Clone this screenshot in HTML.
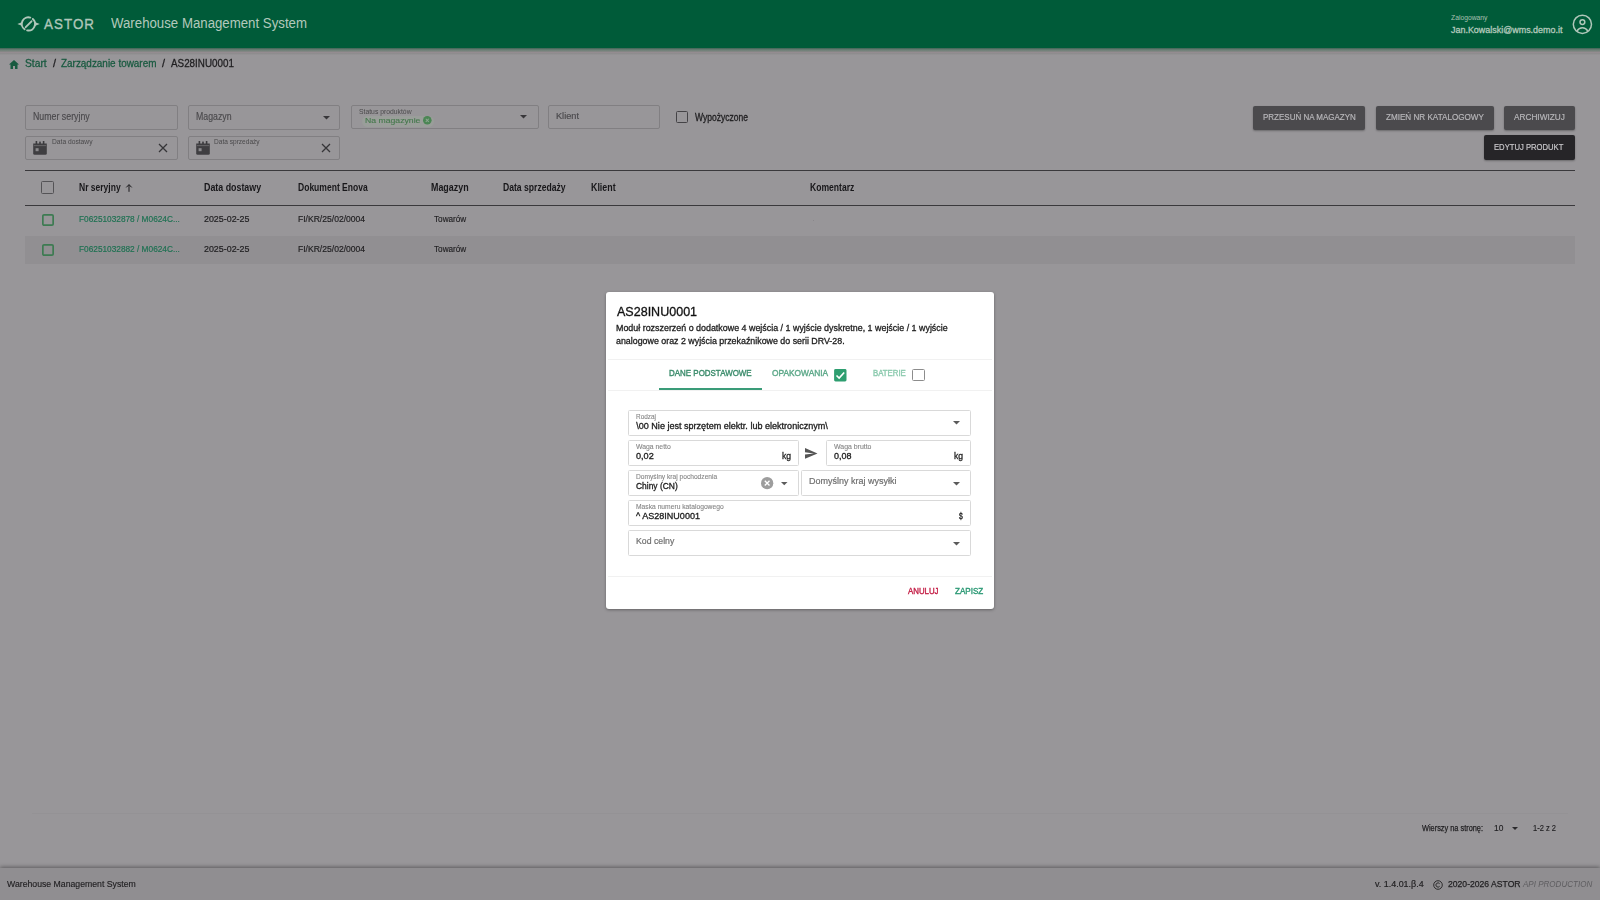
<!DOCTYPE html>
<html><head><meta charset="utf-8">
<style>
*{margin:0;padding:0;box-sizing:border-box}
html,body{width:1600px;height:900px;overflow:hidden}
body{background:#989699;font-family:"Liberation Sans",sans-serif;position:relative}
#root{position:absolute;left:0;top:0;width:1600px;height:900px;filter:blur(0.3px)}
.a{position:absolute}
.t{position:absolute;white-space:nowrap;line-height:1;transform-origin:0 0}
svg{position:absolute;overflow:visible}
</style></head><body><div id="root">
<div class="a" style="left:0px;top:48px;width:1600px;height:7px;background:linear-gradient(#3d6354 0%,#6a7e75 25%,#7b847f 45%,#958c91 62%,#8c8c8d 82%,#989699 100%)"></div>
<div class="a" style="left:0px;top:0px;width:1600px;height:48px;background:#005b39"></div>
<svg style="left:0;top:0" width="50" height="48" viewBox="0 0 50 48">
<g fill="none" stroke="#b0c7ba" stroke-width="1.9" stroke-linecap="round">
<path d="M24.61 29.31 A6.6 6.6 0 0 1 30.33 17.59"/>
<path d="M32.82 18.99 A6.6 6.6 0 0 1 27.14 30.38"/>
<path d="M25.7 27.2 L31.5 21.3"/>
</g>
<path d="M17.4 24 L22.4 21.9 L22.4 26.1 Z" fill="#b0c7ba"/>
<path d="M39.8 24 L34.6 21.9 L34.6 26.1 Z" fill="#b0c7ba"/>
</svg>
<div class="t" style="left:43.75px;top:15.94px;font-size:15.36px;color:#b0c7ba;-webkit-text-stroke:0.35px #b0c7ba;letter-spacing:1.2px;transform:scaleX(0.870);">ASTOR</div>
<div class="t" style="left:111.00px;top:15.68px;font-size:14.49px;color:#b3c9bc;transform:scaleX(0.914);">Warehouse Management System</div>
<div class="t" style="left:1451.00px;top:14.96px;font-size:6.52px;color:#a9c0b3;transform:scaleX(1.038);">Zalogowany</div>
<div class="t" style="left:1451.00px;top:26.11px;font-size:8.70px;color:#b3c9bc;-webkit-text-stroke:0.3px #b3c9bc;transform:scaleX(1.029);">Jan.Kowalski@wms.demo.it</div>
<svg style="left:1572px;top:14px" width="21" height="21" viewBox="0 0 21 21">
<g fill="none" stroke="#b0c7ba" stroke-width="1.5">
<circle cx="10.4" cy="10.3" r="9.1"/>
<circle cx="10.4" cy="8.1" r="2.4"/>
<path d="M4.9 17.2 C6.4 14.8 8.2 13.8 10.4 13.8 C12.6 13.8 14.4 14.8 15.9 17.2"/>
</g></svg>
<svg style="left:9px;top:59.5px" width="10" height="9" viewBox="0 0 10 9"><path d="M5 0 L10 4.5 L8.5 4.5 L8.5 9 L6 9 L6 6 L4 6 L4 9 L1.5 9 L1.5 4.5 L0 4.5 Z" fill="#195a40"/></svg>
<div class="t" style="left:25.00px;top:58.06px;font-size:10.87px;color:#195a40;-webkit-text-stroke:0.3px #195a40;transform:scaleX(0.947);">Start</div>
<div class="t" style="left:52.50px;top:57.64px;font-size:11.59px;color:#1f1e20;-webkit-text-stroke:0.35px #1f1e20;transform:scaleX(0.931);">/</div>
<div class="t" style="left:60.75px;top:58.06px;font-size:10.87px;color:#195a40;-webkit-text-stroke:0.3px #195a40;transform:scaleX(0.914);">Zarządzanie towarem</div>
<div class="t" style="left:162.00px;top:57.64px;font-size:11.59px;color:#1f1e20;-webkit-text-stroke:0.35px #1f1e20;transform:scaleX(0.931);">/</div>
<div class="t" style="left:170.75px;top:57.64px;font-size:11.59px;color:#1f1e20;-webkit-text-stroke:0.3px #1f1e20;transform:scaleX(0.850);">AS28INU0001</div>
<div class="a" style="left:25px;top:105px;width:153px;height:25px;border:1px solid #817f82;border-radius:2px"></div>
<div class="t" style="left:33.00px;top:111.70px;font-size:10.00px;color:#4a494c;-webkit-text-stroke:0.15px #4a494c;transform:scaleX(0.880);">Numer seryjny</div>
<div class="a" style="left:188px;top:105px;width:152px;height:25px;border:1px solid #817f82;border-radius:2px"></div>
<div class="t" style="left:195.70px;top:111.70px;font-size:10.00px;color:#4a494c;-webkit-text-stroke:0.15px #4a494c;transform:scaleX(0.875);">Magazyn</div>
<svg style="left:322.5px;top:115.75px" width="7" height="3.5" viewBox="0 0 7 3.5"><path d="M0 0 H7 L3.5 3.5 Z" fill="#38373a"/></svg>
<div class="a" style="left:351px;top:105px;width:188px;height:24px;border:1px solid #817f82;border-radius:2px"></div>
<div class="t" style="left:359.00px;top:108.69px;font-size:6.96px;color:#4a494b;transform:scaleX(0.978);">Status produktów</div>
<div class="a" style="left:362px;top:115.5px;width:72px;height:11px;border-radius:6px;background:#9a9e9a"></div>
<div class="t" style="left:364.80px;top:117.12px;font-size:7.97px;color:#44784b;-webkit-text-stroke:0.1px #44784b;transform:scaleX(1.087);">Na magazynie</div>
<svg style="left:423.4px;top:116.4px" width="8.6" height="8.6" viewBox="0 0 10 10"><circle cx="5" cy="5" r="5" fill="#4b8654"/><path d="M3.2 3.2 L6.8 6.8 M6.8 3.2 L3.2 6.8" stroke="#8fa893" stroke-width="1.2"/></svg>
<svg style="left:519.5px;top:115.25px" width="7" height="3.5" viewBox="0 0 7 3.5"><path d="M0 0 H7 L3.5 3.5 Z" fill="#38373a"/></svg>
<div class="a" style="left:548px;top:105px;width:112px;height:24px;border:1px solid #817f82;border-radius:2px"></div>
<div class="t" style="left:556.00px;top:112.98px;font-size:8.26px;color:#4a494c;-webkit-text-stroke:0.15px #4a494c;transform:scaleX(1.113);">Klient</div>
<div class="a" style="left:676px;top:111px;width:12px;height:12px;border:1.5px solid #444346;border-radius:1.5px"></div>
<div class="t" style="left:694.50px;top:112.88px;font-size:10.14px;color:#1f1e20;-webkit-text-stroke:0.3px #1f1e20;transform:scaleX(0.842);">Wypożyczone</div>
<div class="a" style="left:25px;top:136px;width:153px;height:24px;border:1px solid #817f82;border-radius:2px"></div>
<div class="a" style="left:188px;top:136px;width:152px;height:24px;border:1px solid #817f82;border-radius:2px"></div>
<svg style="left:33px;top:140px" width="14" height="15" viewBox="0 0 14 15"><path d="M0.2 3.4 H13.8 V13.4 Q13.8 14.8 12.4 14.8 H1.6 Q0.2 14.8 0.2 13.4 Z" fill="#3f3e41"/><rect x="2.6" y="1" width="1.6" height="3" fill="#3b3a3d"/><rect x="6.2" y="1.6" width="1.6" height="2.4" fill="#3b3a3d"/><rect x="9.8" y="1" width="1.6" height="3" fill="#3b3a3d"/><rect x="0.8" y="5.2" width="12.4" height="0.9" fill="#6b6a6d"/><rect x="2.6" y="8.2" width="3" height="3" fill="#8a898c"/></svg>
<div class="t" style="left:51.50px;top:138.24px;font-size:7.25px;color:#4a494b;transform:scaleX(0.922);">Data dostawy</div>
<svg style="left:158px;top:143px" width="10" height="10" viewBox="0 0 10 10"><path d="M1 1 L9 9 M9 1 L1 9" stroke="#363538" stroke-width="1.25"/></svg>
<svg style="left:196px;top:140px" width="14" height="15" viewBox="0 0 14 15"><path d="M0.2 3.4 H13.8 V13.4 Q13.8 14.8 12.4 14.8 H1.6 Q0.2 14.8 0.2 13.4 Z" fill="#3f3e41"/><rect x="2.6" y="1" width="1.6" height="3" fill="#3b3a3d"/><rect x="6.2" y="1.6" width="1.6" height="2.4" fill="#3b3a3d"/><rect x="9.8" y="1" width="1.6" height="3" fill="#3b3a3d"/><rect x="0.8" y="5.2" width="12.4" height="0.9" fill="#6b6a6d"/><rect x="2.6" y="8.2" width="3" height="3" fill="#8a898c"/></svg>
<div class="t" style="left:214.30px;top:138.24px;font-size:7.25px;color:#4a494b;transform:scaleX(0.906);">Data sprzedaży</div>
<svg style="left:321px;top:143px" width="10" height="10" viewBox="0 0 10 10"><path d="M1 1 L9 9 M9 1 L1 9" stroke="#363538" stroke-width="1.25"/></svg>
<div class="a" style="left:1252.5px;top:105.5px;width:112.90000000000009px;height:24.0px;background:#4b4a4d;border-radius:2px;box-shadow:0 1px 2px rgba(0,0,0,.3)"></div>
<div class="t" style="left:1262.50px;top:112.92px;font-size:9.28px;color:#b7b6b9;-webkit-text-stroke:0.2px #b7b6b9;transform:scaleX(0.863);">PRZESUŃ NA MAGAZYN</div>
<div class="a" style="left:1375.6px;top:105.5px;width:118.60000000000014px;height:24.0px;background:#4b4a4d;border-radius:2px;box-shadow:0 1px 2px rgba(0,0,0,.3)"></div>
<div class="t" style="left:1386.00px;top:112.92px;font-size:9.28px;color:#b7b6b9;-webkit-text-stroke:0.2px #b7b6b9;transform:scaleX(0.875);">ZMIEŃ NR KATALOGOWY</div>
<div class="a" style="left:1504.3px;top:105.5px;width:70.40000000000009px;height:24.0px;background:#4b4a4d;border-radius:2px;box-shadow:0 1px 2px rgba(0,0,0,.3)"></div>
<div class="t" style="left:1514.00px;top:112.92px;font-size:9.28px;color:#b7b6b9;-webkit-text-stroke:0.2px #b7b6b9;transform:scaleX(0.890);">ARCHIWIZUJ</div>
<div class="a" style="left:1484px;top:135px;width:90.70000000000005px;height:24.5px;background:#262528;border-radius:2px;box-shadow:0 1px 2px rgba(0,0,0,.3)"></div>
<div class="t" style="left:1494.40px;top:142.23px;font-size:9.49px;color:#c9c8cb;-webkit-text-stroke:0.2px #c9c8cb;transform:scaleX(0.807);">EDYTUJ PRODUKT</div>
<div class="a" style="left:25px;top:170px;width:1550px;height:1px;background:#3a393c"></div>
<div class="a" style="left:41px;top:181px;width:12.5px;height:12.5px;border:1.5px solid #545356;border-radius:1.5px"></div>
<div class="t" style="left:79.00px;top:181.66px;font-size:10.87px;color:#18171a;font-weight:bold;transform:scaleX(0.784);">Nr seryjny</div>
<svg style="left:125px;top:183px" width="8" height="9" viewBox="0 0 8 9"><path d="M4 8.8 V1.8 M1.3 4.4 L4 1.6 L6.7 4.4" fill="none" stroke="#18171a" stroke-width="1"/></svg>
<div class="t" style="left:203.80px;top:181.66px;font-size:10.87px;color:#18171a;font-weight:bold;transform:scaleX(0.816);">Data dostawy</div>
<div class="t" style="left:297.60px;top:181.66px;font-size:10.87px;color:#18171a;font-weight:bold;transform:scaleX(0.786);">Dokument Enova</div>
<div class="t" style="left:431.00px;top:181.66px;font-size:10.87px;color:#18171a;font-weight:bold;transform:scaleX(0.819);">Magazyn</div>
<div class="t" style="left:503.00px;top:181.66px;font-size:10.87px;color:#18171a;font-weight:bold;transform:scaleX(0.792);">Data sprzedaży</div>
<div class="t" style="left:591.00px;top:181.66px;font-size:10.87px;color:#18171a;font-weight:bold;transform:scaleX(0.815);">Klient</div>
<div class="t" style="left:810.00px;top:181.66px;font-size:10.87px;color:#18171a;font-weight:bold;transform:scaleX(0.790);">Komentarz</div>
<div class="a" style="left:25px;top:204.5px;width:1550px;height:1px;background:#3a393c"></div>
<div class="a" style="left:25px;top:235.5px;width:1550px;height:28.5px;background:#918f92"></div>
<div class="a" style="left:813px;top:219.5px;width:1.2px;height:1.2px;background:#858386;border-radius:50%"></div>
<svg style="left:42px;top:214px" width="12" height="12" viewBox="0 0 12 12"><rect x="0.85" y="0.85" width="10.3" height="10.3" rx="1.2" fill="none" stroke="#3d7b52" stroke-width="1.7"/></svg>
<div class="t" style="left:79.00px;top:214.07px;font-size:9.57px;color:#1e7152;-webkit-text-stroke:0.2px #1e7152;transform:scaleX(0.866);">F06251032878 / M0624C...</div>
<div class="t" style="left:203.80px;top:214.07px;font-size:9.57px;color:#1f1e20;-webkit-text-stroke:0.2px #1f1e20;transform:scaleX(0.928);">2025-02-25</div>
<div class="t" style="left:297.60px;top:214.07px;font-size:9.57px;color:#1f1e20;-webkit-text-stroke:0.2px #1f1e20;transform:scaleX(0.895);">FI/KR/25/02/0004</div>
<div class="t" style="left:433.70px;top:214.07px;font-size:9.57px;color:#1f1e20;-webkit-text-stroke:0.15px #1f1e20;transform:scaleX(0.855);">Towarów</div>
<svg style="left:42px;top:244px" width="12" height="12" viewBox="0 0 12 12"><rect x="0.85" y="0.85" width="10.3" height="10.3" rx="1.2" fill="none" stroke="#3d7b52" stroke-width="1.7"/></svg>
<div class="t" style="left:79.00px;top:244.07px;font-size:9.57px;color:#1e7152;-webkit-text-stroke:0.2px #1e7152;transform:scaleX(0.866);">F06251032882 / M0624C...</div>
<div class="t" style="left:203.80px;top:244.07px;font-size:9.57px;color:#1f1e20;-webkit-text-stroke:0.2px #1f1e20;transform:scaleX(0.928);">2025-02-25</div>
<div class="t" style="left:297.60px;top:244.07px;font-size:9.57px;color:#1f1e20;-webkit-text-stroke:0.2px #1f1e20;transform:scaleX(0.895);">FI/KR/25/02/0004</div>
<div class="t" style="left:433.70px;top:244.07px;font-size:9.57px;color:#1f1e20;-webkit-text-stroke:0.15px #1f1e20;transform:scaleX(0.855);">Towarów</div>
<div class="t" style="left:1421.90px;top:823.24px;font-size:9.42px;color:#1f1e20;-webkit-text-stroke:0.25px #1f1e20;transform:scaleX(0.783);">Wierszy na stronę:</div>
<div class="t" style="left:1494.40px;top:823.24px;font-size:9.42px;color:#1f1e20;-webkit-text-stroke:0.15px #1f1e20;transform:scaleX(0.893);">10</div>
<svg style="left:1512.2px;top:827.0px" width="6" height="3" viewBox="0 0 6 3"><path d="M0 0 H6 L3.0 3 Z" fill="#2a292c"/></svg>
<div class="t" style="left:1533.00px;top:823.24px;font-size:9.42px;color:#1f1e20;-webkit-text-stroke:0.15px #1f1e20;transform:scaleX(0.799);">1-2 z 2</div>
<div class="a" style="left:0px;top:868px;width:1600px;height:32px;background:#908e91;box-shadow:0 -1px 4px rgba(0,0,0,.4)"></div>
<div class="a" style="left:32px;top:813px;width:1536px;height:1px;background:rgba(0,0,0,.022)"></div>
<div class="t" style="left:7.00px;top:878.99px;font-size:9.42px;color:#222123;-webkit-text-stroke:0.15px #222123;transform:scaleX(0.925);">Warehouse Management System</div>
<div class="t" style="left:1375.00px;top:878.99px;font-size:9.42px;color:#222123;-webkit-text-stroke:0.2px #222123;transform:scaleX(0.949);">v. 1.4.01.β.4</div>
<svg style="left:1433px;top:879.5px" width="10" height="10" viewBox="0 0 10 10"><circle cx="5" cy="5" r="4.3" fill="none" stroke="#222123" stroke-width="0.9"/><path d="M6.6 3.6 A2.1 2.1 0 1 0 6.6 6.4" fill="none" stroke="#222123" stroke-width="0.9"/></svg>
<div class="t" style="left:1447.70px;top:878.99px;font-size:9.42px;color:#222123;-webkit-text-stroke:0.25px #222123;transform:scaleX(0.915);">2020-2026 ASTOR</div>
<div class="t" style="left:1523.10px;top:878.99px;font-size:9.42px;color:#5e5d60;font-style:italic;transform:scaleX(0.854);">API PRODUCTION</div>
<div class="a" style="left:606px;top:292px;width:388px;height:317px;background:#fff;border-radius:3px;box-shadow:0 1px 3px rgba(0,0,0,.35)"></div>
<div class="t" style="left:616.60px;top:304.74px;font-size:13.48px;color:#111;-webkit-text-stroke:0.32px #111;transform:scaleX(0.930);">AS28INU0001</div>
<div class="t" style="left:616.30px;top:323.86px;font-size:8.41px;color:#1c1c1c;-webkit-text-stroke:0.28px #1c1c1c;transform:scaleX(1.058);">Moduł rozszerzeń o dodatkowe 4 wejścia / 1 wyjście dyskretne, 1 wejście / 1 wyjście</div>
<div class="t" style="left:616.30px;top:337.46px;font-size:8.41px;color:#1c1c1c;-webkit-text-stroke:0.28px #1c1c1c;transform:scaleX(1.053);">analogowe oraz 2 wyjścia przekaźnikowe do serii DRV-28.</div>
<div class="a" style="left:608px;top:359px;width:384px;height:1px;background:#f1f1f1"></div>
<div class="t" style="left:668.75px;top:369.14px;font-size:9.13px;color:#3d8d6d;-webkit-text-stroke:0.42px #3d8d6d;transform:scaleX(0.872);">DANE PODSTAWOWE</div>
<div class="a" style="left:658.75px;top:388.3px;width:103.2px;height:2px;background:#3a9c78"></div>
<div class="t" style="left:771.80px;top:369.14px;font-size:9.13px;color:#5ea98a;-webkit-text-stroke:0.42px #5ea98a;transform:scaleX(0.916);">OPAKOWANIA</div>
<svg style="left:834px;top:368.7px" width="12.6" height="12.4" viewBox="0 0 13 13"><rect x="0" y="0" width="13" height="13" rx="1.5" fill="#2e9e70"/><path d="M2.5 6.8 L5.3 9.5 L10.6 3.6" fill="none" stroke="#fff" stroke-width="1.7"/></svg>
<div class="t" style="left:873.40px;top:369.14px;font-size:9.13px;color:#8ecbb0;-webkit-text-stroke:0.42px #8ecbb0;transform:scaleX(0.854);">BATERIE</div>
<div class="a" style="left:912.4px;top:369px;width:12.5px;height:12.3px;border:1.5px solid #8c8c8c;border-radius:1.5px"></div>
<div class="a" style="left:608px;top:390px;width:384px;height:1px;background:#f1f1f1"></div>
<div class="a" style="left:628px;top:410px;width:343px;height:25.5px;border:1px solid #d9d9d9;border-radius:1.5px"></div>
<div class="t" style="left:636.25px;top:414.21px;font-size:6.52px;color:#858585;-webkit-text-stroke:0.1px #858585;transform:scaleX(0.985);">Rodzaj</div>
<div class="t" style="left:636.25px;top:422.30px;font-size:9.06px;color:#1e1e1e;-webkit-text-stroke:0.32px #1e1e1e;">\00 Nie jest sprzętem elektr. lub elektronicznym\</div>
<svg style="left:952.75px;top:421.45px" width="7" height="3.5" viewBox="0 0 7 3.5"><path d="M0 0 H7 L3.5 3.5 Z" fill="#5b5b5b"/></svg>
<div class="a" style="left:628px;top:440px;width:170.5px;height:25.5px;border:1px solid #d9d9d9;border-radius:1.5px"></div>
<div class="t" style="left:636.25px;top:444.21px;font-size:6.52px;color:#858585;-webkit-text-stroke:0.1px #858585;transform:scaleX(1.050);">Waga netto</div>
<div class="t" style="left:636.25px;top:452.30px;font-size:9.06px;color:#1e1e1e;-webkit-text-stroke:0.32px #1e1e1e;transform:scaleX(1.007);">0,02</div>
<div class="t" style="left:781.90px;top:452.18px;font-size:9.20px;color:#1e1e1e;-webkit-text-stroke:0.32px #1e1e1e;transform:scaleX(0.937);">kg</div>
<svg style="left:805.3px;top:447.5px" width="12.5" height="10.8" viewBox="2 3 21 18"><path d="M2.01 21L23 12 2.01 3 2 10l15 2-15 2z" fill="#555"/></svg>
<div class="a" style="left:826px;top:440px;width:145px;height:25.5px;border:1px solid #d9d9d9;border-radius:1.5px"></div>
<div class="t" style="left:833.75px;top:444.21px;font-size:6.52px;color:#858585;-webkit-text-stroke:0.1px #858585;transform:scaleX(1.063);">Waga brutto</div>
<div class="t" style="left:833.75px;top:452.30px;font-size:9.06px;color:#1e1e1e;-webkit-text-stroke:0.32px #1e1e1e;transform:scaleX(0.993);">0,08</div>
<div class="t" style="left:954.40px;top:452.18px;font-size:9.20px;color:#1e1e1e;-webkit-text-stroke:0.32px #1e1e1e;transform:scaleX(0.937);">kg</div>
<div class="a" style="left:628px;top:470px;width:170.5px;height:25.5px;border:1px solid #d9d9d9;border-radius:1.5px"></div>
<div class="t" style="left:636.25px;top:474.21px;font-size:6.52px;color:#858585;-webkit-text-stroke:0.1px #858585;transform:scaleX(1.019);">Domyślny kraj pochodzenia</div>
<div class="t" style="left:636.25px;top:482.30px;font-size:9.06px;color:#1e1e1e;-webkit-text-stroke:0.32px #1e1e1e;transform:scaleX(0.932);">Chiny (CN)</div>
<svg style="left:761px;top:476.9px" width="12.3" height="12.3" viewBox="0 0 12 12"><circle cx="6" cy="6" r="6" fill="#9d9d9d"/><path d="M3.7 3.7 L8.3 8.3 M8.3 3.7 L3.7 8.3" stroke="#fff" stroke-width="1.3"/></svg>
<svg style="left:780.95px;top:481.7px" width="6.5" height="3.2" viewBox="0 0 6.5 3.2"><path d="M0 0 H6.5 L3.25 3.2 Z" fill="#5b5b5b"/></svg>
<div class="a" style="left:801px;top:470px;width:170px;height:25.5px;border:1px solid #d9d9d9;border-radius:1.5px"></div>
<div class="t" style="left:808.75px;top:477.30px;font-size:9.06px;color:#6f6f6f;-webkit-text-stroke:0.2px #6f6f6f;transform:scaleX(0.994);">Domyślny kraj wysyłki</div>
<svg style="left:952.75px;top:481.55px" width="7" height="3.5" viewBox="0 0 7 3.5"><path d="M0 0 H7 L3.5 3.5 Z" fill="#5b5b5b"/></svg>
<div class="a" style="left:628px;top:500px;width:343px;height:25.5px;border:1px solid #d9d9d9;border-radius:1.5px"></div>
<div class="t" style="left:636.25px;top:504.21px;font-size:6.52px;color:#858585;-webkit-text-stroke:0.1px #858585;transform:scaleX(1.030);">Maska numeru katalogowego</div>
<div class="t" style="left:636.25px;top:511.52px;font-size:9.28px;color:#1e1e1e;-webkit-text-stroke:0.32px #1e1e1e;transform:scaleX(0.974);">^ AS28INU0001</div>
<div class="t" style="left:959.25px;top:511.50px;font-size:9.30px;color:#1e1e1e;-webkit-text-stroke:0.32px #1e1e1e;transform:scaleX(0.725);">$</div>
<div class="a" style="left:628px;top:530px;width:343px;height:25.5px;border:1px solid #d9d9d9;border-radius:1.5px"></div>
<div class="t" style="left:636.25px;top:537.30px;font-size:9.06px;color:#6f6f6f;-webkit-text-stroke:0.2px #6f6f6f;transform:scaleX(0.964);">Kod celny</div>
<svg style="left:952.75px;top:541.55px" width="7" height="3.5" viewBox="0 0 7 3.5"><path d="M0 0 H7 L3.5 3.5 Z" fill="#5b5b5b"/></svg>
<div class="a" style="left:608px;top:575.5px;width:384px;height:1px;background:#f1f1f1"></div>
<div class="t" style="left:907.90px;top:586.49px;font-size:9.42px;color:#c5234a;-webkit-text-stroke:0.42px #c5234a;transform:scaleX(0.835);">ANULUJ</div>
<div class="t" style="left:954.60px;top:586.49px;font-size:9.42px;color:#2f9b77;-webkit-text-stroke:0.42px #2f9b77;transform:scaleX(0.855);">ZAPISZ</div>
</div></body></html>
